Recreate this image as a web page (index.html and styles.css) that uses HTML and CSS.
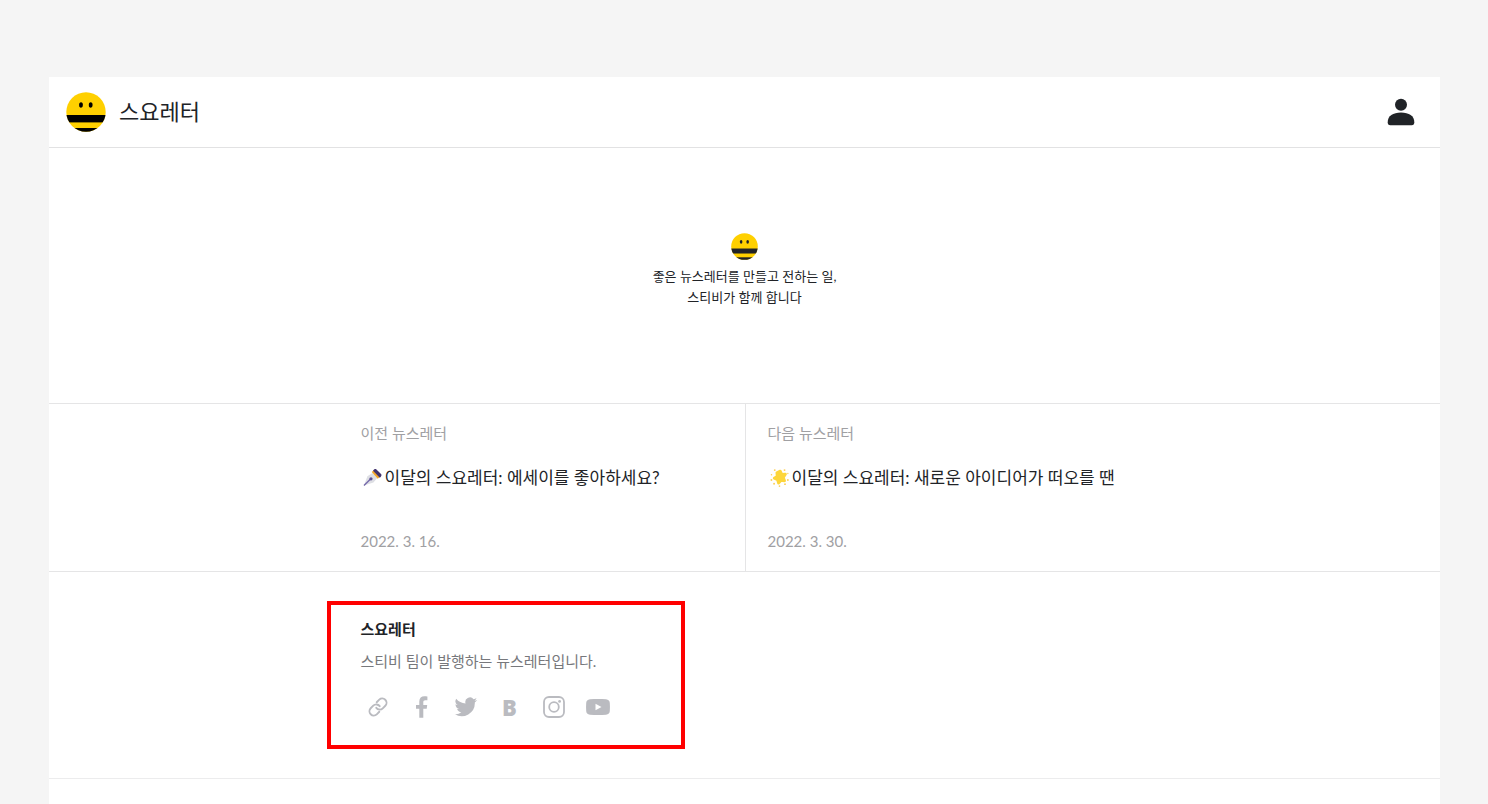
FILE: index.html
```html
<!DOCTYPE html>
<html lang="ko">
<head>
<meta charset="utf-8">
<meta name="viewport" content="width=device-width, initial-scale=1">
<title>스요레터</title>
<link rel="stylesheet" href="styles.css">
</head>
<body>
<svg class="defs" aria-hidden="true">
  <defs>
    <clipPath id="face"><circle cx="20" cy="20" r="19.7"/></clipPath>
    <symbol id="bee" viewBox="0 0 40 40">
      <g clip-path="url(#face)">
        <rect width="40" height="40" fill="#ffd000"/>
        <rect y="23" width="40" height="7.4" fill="currentColor"/>
        <rect y="36" width="40" height="4" fill="currentColor"/>
      </g>
      <ellipse cx="15" cy="13" rx="1.9" ry="2.8" fill="currentColor"/>
      <ellipse cx="24.7" cy="13" rx="1.9" ry="2.8" fill="currentColor"/>
    </symbol>
  </defs>
</svg>
<div class="page">
  <header class="header">
    <a class="brand" href="#">
      <svg class="brand-logo"><use href="#bee"/></svg>
      <span>스요레터</span>
    </a>
    <button class="account" type="button" aria-label="내 계정">
      <svg viewBox="0 0 28 28"><circle cx="14" cy="6.8" r="6"/><path d="M.7 24.2C.7 18 6 14.600 14 14.600s13.300 3.400 13.300 9.600c0 2-.8 3-2.600 3H3.300C1.500 27.200.7 26.200.7 24.200z"/></svg>
    </button>
  </header>

  <section class="closing">
    <svg class="closing-logo"><use href="#bee"/></svg>
    <p>좋은 뉴스레터를 만들고 전하는 일,<br>스티비가 함께 합니다</p>
  </section>

  <nav class="pager">
    <div class="pager-inner">
      <a class="pager-item" href="#">
        <span class="label">이전 뉴스레터</span>
        <span class="title">
          <svg class="emoji" viewBox="0 0 20 20"><path d="M1 18.500 4.600 8.800 10 5.200l5 5.400-4 4.600z" fill="#dedfe4"/><path d="m9.200 4.200 2-1.800 6.400 7-2.100 2z" fill="#f5a62b"/><path d="M10.600 2.800C11.600 1.200 12.800.8 13.900 1.400l5.300 5.300c.6 1.100.2 2.200-1.500 3.500z" fill="#41326d"/><path d="m1 18.500 7-7" stroke="#7468aa" stroke-width="1.400"/><circle cx="8.400" cy="11.400" r="1.700" fill="#5c5094"/></svg>
          <span>이달의 스요레터: 에세이를 좋아하세요?</span>
        </span>
        <time class="date" datetime="2022-03-16">2022. 3. 16.</time>
      </a>
      <a class="pager-item pager-next" href="#">
        <span class="label">다음 뉴스레터</span>
        <span class="title">
          <svg class="emoji" viewBox="0 0 20 20"><path d="M10.800 3.300 12.300 6.700 16.200 6.600 14 9.900 15.300 13.400 11.600 13 9 15.900 8 12.300 4.500 10.800 7.600 8.800 7.300 5z" fill="#fdd63b" stroke="#fdd63b" stroke-width="3" stroke-linejoin="round"/><g fill="#fccf55"><circle cx="5" cy="2.200" r="1"/><circle cx="15.300" cy="2.200" r="1"/><circle cx="1.600" cy="7" r=".8"/><circle cx="18.800" cy="5.800" r=".7"/><circle cx="1.500" cy="12.700" r="1"/><circle cx="18.800" cy="12.700" r="1"/><circle cx="4.300" cy="16.600" r="1"/><circle cx="15.800" cy="17" r="1"/><circle cx="10" cy="19" r=".9"/></g></svg>
          <span>이달의 스요레터: 새로운 아이디어가 떠오를 땐</span>
        </span>
        <time class="date" datetime="2022-03-30">2022. 3. 30.</time>
      </a>
    </div>
  </nav>

  <footer class="footer">
    <div class="footer-inner">
      <div class="profile">
        <h2>스요레터</h2>
        <p>스티비 팀이 발행하는 뉴스레터입니다.</p>
        <div class="social">
          <a href="#" aria-label="홈페이지"><svg viewBox="-2 -2 28 28" fill="none" stroke="currentColor" stroke-width="2.200" stroke-linecap="round"><path d="M10 13a5 5 0 0 0 7.540.540l3-3a5 5 0 0 0-7.070-7.070l-3 3"/><path d="M14 11a5 5 0 0 0-7.540-.540l-3 3a5 5 0 0 0 7.070 7.070l3-3"/></svg></a>
          <a href="#" aria-label="페이스북"><svg viewBox="0 0 24 24" fill="currentColor"><path d="M9.300 22.700V13.800H6V9.900h3.300V6.600c0-3.500 2-5.300 5.100-5.300 1.300 0 2.500.1 3 .2V5.200h-2c-1.700 0-2.100.8-2.100 2v2.700h3.900l-.5 3.900h-3.400v8.900z"/></svg></a>
          <a href="#" aria-label="트위터"><svg viewBox="0 0 24 24" fill="currentColor"><path d="M23.200 4.900c-.8.400-1.700.6-2.700.8 1-.6 1.700-1.500 2-2.600-.9.500-1.900.9-2.900 1.100A4.600 4.600 0 0 0 11.600 8.500C7.800 8.300 4.400 6.500 2.200 3.700a4.600 4.600 0 0 0 1.400 6.200c-.8 0-1.500-.2-2.100-.6v.1c0 2.200 1.600 4.100 3.700 4.500-.7.200-1.400.2-2.100.1.600 1.800 2.300 3.200 4.300 3.200A9.300 9.300 0 0 1 .6 19.100 13.100 13.100 0 0 0 20.800 7.400c1-.7 1.800-1.500 2.400-2.500z"/></svg></a>
          <a class="brunch" href="#" aria-label="브런치">B</a>
          <a href="#" aria-label="인스타그램"><svg viewBox="0 0 24 24" fill="none" stroke="currentColor" stroke-width="1.800"><rect x="2" y="2" width="20" height="20" rx="5"/><circle cx="12" cy="12" r="4.800"/><circle cx="17.600" cy="6.400" r="1.400" fill="currentColor" stroke="none"/></svg></a>
          <a href="#" aria-label="유튜브"><svg viewBox="0 0 24 24" fill="currentColor" fill-rule="evenodd"><path d="M4 4.200c5-.4 11-.4 16 0 2.500.3 3.700 1.500 3.800 3.700.2 2.700.2 5.500 0 8.200-.1 2.200-1.300 3.400-3.800 3.700-5 .4-11 .4-16 0C1.500 19.500.3 18.300.2 16.100c-.2-2.700-.2-5.500 0-8.200C.3 5.700 1.500 4.500 4 4.200zM9.500 8.800v6.400l6-3.200z"/></svg></a>
        </div>
      </div>
    </div>
  </footer>
</div>
</body>
</html>
```
FILE: styles.css
```css
* { box-sizing: border-box; }

body {
  margin: 0;
  padding: 77px 48px 0 49px;
  min-height: 100vh;
  display: flex;
  background: #f5f5f5;
  color: #212327;
  font-family: Lato, "Noto Sans CJK KR", sans-serif;
}

a { color: inherit; text-decoration: none; }
p, h2 { margin: 0; }
.defs { position: absolute; width: 0; height: 0; }

.page { flex: 1; background: #fff; }

.header {
  display: flex;
  align-items: center;
  justify-content: space-between;
  padding: 15px 25px 15px 17px;
  border-bottom: 1px solid #e2e2e3;
}
.brand {
  display: flex;
  align-items: center;
  gap: 13px;
  font-size: 22px;
  line-height: 36px;
}
.brand-logo { width: 40px; height: 40px; color: #000; }
.account {
  display: flex;
  padding: 0;
  border: 0;
  background: none;
  cursor: pointer;
}
.account svg { width: 28px; height: 28px; fill: #202327; }

.closing {
  display: flex;
  flex-direction: column;
  align-items: center;
  gap: 6px;
  padding: 85px 24px 95px;
  text-align: center;
  font-size: 13px;
  line-height: 21px;
}
.closing-logo { width: 27px; height: 27px; color: #212327; }

.pager {
  border-top: 1px solid #e5e5e6;
  border-bottom: 1px solid #e5e5e6;
}
.pager-inner, .footer-inner { max-width: 768px; margin: 0 auto; }
.pager-inner { display: grid; grid-template-columns: 1fr 1fr; }
.pager-item {
  display: flex;
  flex-direction: column;
  padding: 17px 0 18px;
}
.pager-next { padding-left: 22px; border-left: 1px solid #e5e5e6; }
.label { font-size: 15px; line-height: 24px; color: #a0a0a3; }
.title {
  display: flex;
  align-items: center;
  gap: 3px;
  padding-left: 2px;
  margin: 19px 0 38px;
  font-size: 17px;
  line-height: 27px;
}
.emoji { width: 19px; height: 19px; }
.date { font-size: 15px; line-height: 24px; color: #a0a0a3; }

.footer { padding: 29px 0; border-bottom: 1px solid #ececed; }
.profile {
  width: 358px;
  margin-left: -34px;
  padding: 12px 30px 26px;
  border: 4px solid #f00;
}
.profile h2 { font-size: 15px; line-height: 24px; font-weight: 700; }
.profile p {
  margin-top: 8px;
  font-size: 15px;
  line-height: 24px;
  color: #77787c;
}
.social {
  display: flex;
  gap: 20px;
  margin-top: 22px;
  padding-left: 5px;
  color: #babbc0;
}
.social a {
  display: flex;
  align-items: center;
  justify-content: center;
  width: 24px;
  height: 24px;
}
.social svg { width: 24px; height: 24px; }
.social .brunch { font-family: "Open Sans", sans-serif; font-size: 22px; font-weight: 800; line-height: 24px; }
```
